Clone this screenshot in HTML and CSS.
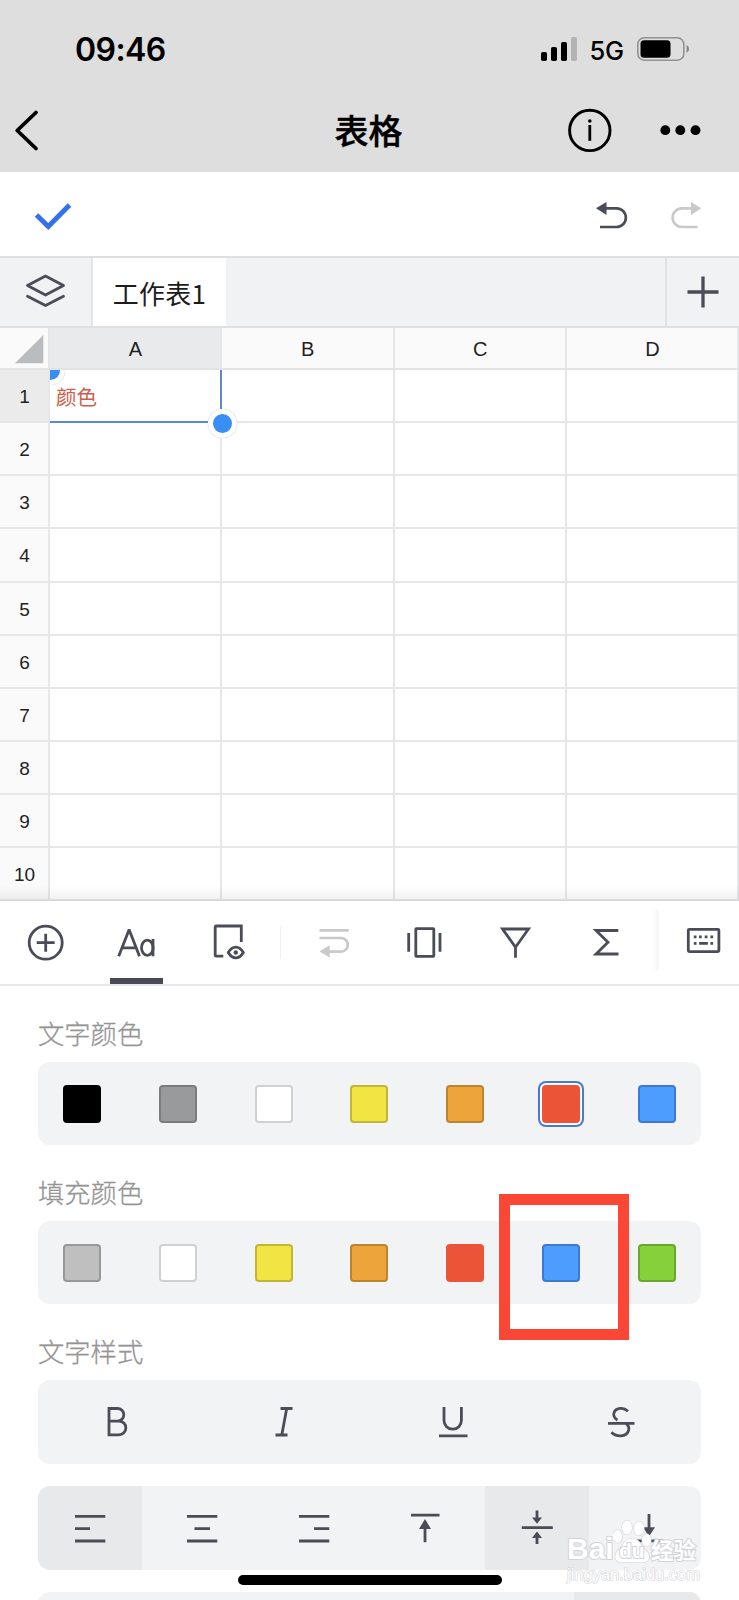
FILE: index.html
```html
<!DOCTYPE html>
<html lang="zh-CN">
<head>
<meta charset="utf-8">
<title>表格</title>
<link rel="stylesheet" href="styles.css">
</head>
<body>
<div class="phone">
  <header class="top">
    <div class="status">
      <span class="time">09:46</span>
      <div class="status-right">
        <svg width="36" height="24" viewBox="0 0 36 24"><rect y="15" width="6" height="9" rx="1.8"/><rect x="10" y="10" width="6" height="14" rx="1.8"/><rect x="20" y="5" width="6" height="19" rx="1.8"/><rect x="30" width="6" height="24" rx="1.8" fill="#b3b3b3"/></svg>
        <span class="net">5G</span>
        <svg width="53" height="24" viewBox="0 0 53 24"><rect x=".8" y=".8" width="46" height="22.4" rx="6.500" fill="none" stroke="#929292" stroke-width="1.600"/><rect x="3.500" y="3.200" width="30" height="17.600" rx="3.600"/><path d="M49.500 8q2.600 1.200 2.600 4t-2.600 4z" fill="#888"/></svg>
      </div>
    </div>
    <div class="nav">
      <svg class="back" width="60" height="84" viewBox="0 0 60 84"><path d="M36 24.500 17.200 42.500 36 60.500" fill="none" stroke="#000" stroke-width="3.800" stroke-linecap="round" stroke-linejoin="round"/></svg>
      <h1>表格</h1>
      <svg class="nav-actions" width="180" height="84" viewBox="0 0 180 84"><circle cx="30.800" cy="42.400" r="20.200" fill="none" stroke="#000" stroke-width="2.900"/><path d="M30.800 37v15.800" stroke="#000" stroke-width="2.800"/><circle cx="30.800" cy="33" r="1.800"/><circle cx="106.300" cy="42.200" r="4.900"/><circle cx="121.300" cy="42.200" r="4.900"/><circle cx="136.500" cy="42.200" r="4.900"/></svg>
    </div>
  </header>

  <div class="edit">
    <svg width="90" height="84" viewBox="0 0 90 84"><path d="M36.500 43 48.300 54.500 69.500 33" fill="none" stroke="#3472ec" stroke-width="5"/></svg>
    <svg width="160" height="84" viewBox="0 0 160 84"><path d="M26 36.300h11.500a9.300 9.300 0 0 1 0 18.700H21" fill="none" stroke="#4a4c57" stroke-width="2.700"/><path d="M17 36.300 27.500 30v13z" fill="#4a4c57"/><path d="M112.500 36.300H103a9.300 9.300 0 0 0 0 18.700h15.500" fill="none" stroke="#c9c9ca" stroke-width="2.700"/><path d="M122.300 36.300 112 30v13z" fill="#c9c9ca"/></svg>
  </div>

  <div class="tabs">
    <div class="layers"><svg width="91" height="68" viewBox="0 0 91 68"><g fill="none" stroke="#4a4c57" stroke-width="2.800" stroke-linejoin="round" stroke-linecap="round"><path d="M45.500 18 63.500 27.500 45.500 37 27.500 27.500z"/><path d="M27.500 38.300 45.500 47.500 63.500 38.300"/></g></svg></div>
    <div class="tab">工作表1</div>
    <div class="add"><svg width="72" height="68" viewBox="0 0 72 68"><path d="M20.500 34h31M36 18.500v31" stroke="#4a4c57" stroke-width="3.300"/></svg></div>
  </div>

  <div class="sheet">
    <div class="cols">
      <div class="corner"><svg width="47" height="40" viewBox="0 0 47 40"><path d="M15 35.300 43.300 7v28.300z" fill="#b9bdbf"/></svg></div>
      <div class="active">A</div><div>B</div><div>C</div><div>D</div>
    </div>
    <div class="row"><b class="active">1</b><i class="selected">颜色<span class="handle start"></span><span class="handle end"></span></i><i></i><i></i><i></i></div>
    <div class="row"><b>2</b><i></i><i></i><i></i><i></i></div>
    <div class="row"><b>3</b><i></i><i></i><i></i><i></i></div>
    <div class="row"><b>4</b><i></i><i></i><i></i><i></i></div>
    <div class="row"><b>5</b><i></i><i></i><i></i><i></i></div>
    <div class="row"><b>6</b><i></i><i></i><i></i><i></i></div>
    <div class="row"><b>7</b><i></i><i></i><i></i><i></i></div>
    <div class="row"><b>8</b><i></i><i></i><i></i><i></i></div>
    <div class="row"><b>9</b><i></i><i></i><i></i><i></i></div>
    <div class="row"><b>10</b><i></i><i></i><i></i><i></i></div>
    <div class="fade"></div>
  </div>

  <div class="tools">
    <svg viewBox="0 0 91 83"><g class="ink"><circle cx="45.700" cy="41.700" r="16.500"/><path d="M36.700 41.700h18M45.700 32.700v18"/></g></svg>
    <div class="tool-active"><svg viewBox="0 0 91 83"><g class="ink"><path d="M27.700 55.300 37.800 29.500h.6L48.500 55.300M31.500 46.800h13.200"/><ellipse cx="56.300" cy="46.800" rx="5.800" ry="7.600"/><path d="M62 38v17.300"/></g></svg></div>
    <svg viewBox="0 0 93 83"><g class="ink"><path d="M41.300 55.200H34.200a1 1 0 0 1-1-1V26a1 1 0 0 1 1-1h25.100V41"/><path d="M46.300 51.500q3-5.300 7.500-5.300t7.500 5.300q-3 5.300-7.500 5.300t-7.500-5.300z"/></g><circle cx="53.800" cy="51.500" r="2.200" fill="#4a4c57"/></svg>
    <div class="divider"></div>
    <svg viewBox="0 0 90 83"><path d="M30.500 29.400h29.200M30.500 37H52a6.800 6.800 0 0 1 0 13.600H39" fill="none" stroke="#c9c9ca" stroke-width="2.700"/><path d="M30.500 50.600 40.700 44.300v12.200z" fill="#c9c9ca"/></svg>
    <svg viewBox="0 0 91 83"><g class="ink"><path d="M29.700 32v18.700M61 32v18.700"/><rect x="36.800" y="27.700" width="18" height="27.600" rx=".5"/></g></svg>
    <svg viewBox="0 0 90 83"><path class="ink" d="M45 45.500 32.500 28h26L46 45.500M45.500 44.500v12.200"/></svg>
    <svg viewBox="0 0 92 83"><path class="ink" d="M58.300 29.500H36L48 41.200 36 53h22.500"/></svg>
    <div class="edge"></div>
    <svg viewBox="0 0 72 83"><rect class="ink" x="21.300" y="28.400" width="30.600" height="22.200" rx="1"/><path d="M26.800 35.800h2.700m2.500 0h2.700m3 0h2.700m3 0h2.700M26.800 42.300h2.700m2.600 0h8.800m2.500 0h2.700" stroke="#4a4c57" stroke-width="2.700"/></svg>
  </div>

  <main class="panel">
    <h2>文字颜色</h2>
    <div class="swatches"><span class="black"></span><span class="gray"></span><span class="white"></span><span class="yellow"></span><span class="orange"></span><span class="red picked"></span><span class="blue"></span></div>
    <h2>填充颜色</h2>
    <div class="swatches"><span class="silver"></span><span class="white"></span><span class="yellow"></span><span class="orange"></span><span class="red"></span><span class="blue"></span><span class="green"></span><div class="callout"></div></div>
    <h2>文字样式</h2>
    <div class="group styles">
      <div><svg width="40" height="40" viewBox="0 0 40 40"><path class="ink" d="M11 6.500h8.500a6 6 0 0 1 0 12.600H11zM11 19.100h10a6.800 6.800 0 0 1 0 13.700H11z"/></svg></div>
      <div><svg width="40" height="40" viewBox="0 0 40 40"><path class="ink" d="M14.500 6.500h12M9.500 33h12M20.700 6.500 15.800 33"/></svg></div>
      <div><svg width="40" height="40" viewBox="0 0 40 40"><path class="ink" d="M11 5v13.500a8.700 8.700 0 0 0 17.400 0V5M6 33.800h28.500"/></svg></div>
      <div><svg width="40" height="40" viewBox="0 0 40 40"><path class="ink" d="M27 9.200C24.500 6.800 21.500 6 18.800 6.400 12.500 7.200 10.200 14.500 16.500 18M10.500 30.200C13 33 16.500 34 20 33.800 27.500 33.300 30.500 26 25 21.500M7 21.400h26.500"/></svg></div>
    </div>
    <div class="group align">
      <div class="on"><svg width="32" height="32" viewBox="0 0 32 32"><path class="ink" d="M1 4.300h30.300M1 16.600h15M1 29h30.300"/></svg></div>
      <div><svg width="32" height="32" viewBox="0 0 32 32"><path class="ink" d="M1 4.300h30.300M8.500 16.600h15.500M1 29h30.300"/></svg></div>
      <div><svg width="32" height="32" viewBox="0 0 32 32"><path class="ink" d="M1 4.300h30.300M16 16.600h15.300M1 29h30.300"/></svg></div>
      <div><svg width="32" height="36" viewBox="0 0 32 36"><path class="ink" d="M2 5.200h28.500M16 16v16.300"/><path d="M16 9 22 19H10z" fill="#4a4c57"/></svg></div>
      <div class="on"><svg width="32" height="36" viewBox="0 0 32 36"><path class="ink" d="M.8 17.600h31M16 .500v8M16 26v8"/><path d="M11 7.500h10l-5 6.300zM11 28h10l-5-6.600z" fill="#4a4c57"/></svg></div>
      <div><svg width="32" height="36" viewBox="0 0 32 36"><path class="ink" d="M2 30.800h28.500M16 4v15"/><path d="M10 17.300h12L16 26.500z" fill="#4a4c57"/></svg></div>
    </div>
    <div class="group next"><div></div><div class="on"></div></div>
  </main>
  <div class="home"></div>
  <div class="watermark">
    <div class="brand"><span>Bai</span><div class="paw"><svg width="42" height="44" viewBox="0 0 42 44"><g fill="#fff" stroke="#d3d4d7" stroke-width="1.200"><ellipse cx="4.500" cy="16.500" rx="4.700" ry="6.500"/><ellipse cx="14" cy="7.500" rx="5" ry="7"/><ellipse cx="26" cy="8.500" rx="5" ry="7"/><ellipse cx="33.500" cy="20" rx="4.500" ry="6"/><path d="M19 18.500c8 0 9 8 14 12 6 6 3 12-4 12-7-.8-13-.8-20 0-7 0-9-7-4-12 5-4 6-12 14-12z"/></g></svg><em>du</em></div><strong>经验</strong></div>
    <div class="url">jingyan.baidu.com</div>
  </div>
</div>
</body>
</html>
```

FILE: styles.css
```css
* { box-sizing: border-box; }
body { margin: 0; font-family: "Liberation Sans", "Noto Sans CJK SC", sans-serif; color: #1f1f21; background: #fff; }
svg { display: block; flex: none; }
.phone { position: relative; width: 739px; height: 1600px; overflow: hidden; display: flex; flex-direction: column; }
.phone > * { flex: none; }
.ink { fill: none; stroke: #4a4c57; stroke-width: 2.8; }

.top { height: 172px; background: #dedede; color: #000; font-family: Inter, "Noto Sans CJK SC", sans-serif; }
.status { height: 88px; display: flex; justify-content: space-between; padding: 29px 49px 0 75px; }
.time { font-size: 32px; line-height: 41px; font-weight: 600; letter-spacing: -.6px; }
.status-right { display: flex; align-items: flex-start; padding-top: 8px; }
.net { width: 60.5px; padding-left: 13px; font-size: 25.5px; line-height: 27px; font-weight: 500; letter-spacing: -.3px; }
.nav { height: 84px; display: grid; grid-template-columns: 60px 1fr 180px; align-items: center; }
.nav h1 { margin: 0; padding: 3px 0 0 118px; text-align: center; font-size: 34px; line-height: 48px; font-weight: 500; -webkit-text-stroke: .4px #000; }

.edit { height: 86px; border-bottom: 2px solid #dedfe0; display: flex; justify-content: space-between; }
.tabs { height: 70px; border-bottom: 2px solid #dfe0e2; background: #f1f2f4; display: flex; }
.layers { width: 93px; border-right: 2px solid #e4e5e7; }
.tab { width: 133px; background: #fff; padding-top: 2px; text-align: center; font: 26px/66px "Noto Sans CJK SC", sans-serif; letter-spacing: .3px; color: #1c1c1c; }
.add { margin-left: auto; width: 74px; border-left: 2px solid #e0e1e3; }

.sheet { position: relative; height: 573px; overflow: hidden; }
.cols, .row { display: grid; grid-template-columns: 50px 172px 172.5px 172.5px 172px; }
.cols { height: 42px; font-size: 20px; line-height: 43px; text-align: center; }
.cols > div { background: #fafafb; border-right: 2px solid #e5e6e8; border-bottom: 2px solid #e2e3e5; height: 42px; padding-left: 1px; }
.cols > .corner { padding: 0; }
.cols > .active { background: #e9eaeb; }
.row { height: 53.15px; grid-template-rows: 53.15px; font-size: 19px; line-height: 54px; }
.row > * { border-right: 2px solid #e6e7e9; border-bottom: 2px solid #e6e7e9; font-style: normal; font-weight: 400; }
.row > b { background: #fafafa; text-align: center; padding-left: 1px; }
.row > .active { background: #ebebec; }
.row > .selected { position: relative; border-color: #5e87ce; padding-left: 6px; font: 20.5px/52px "Noto Sans CJK SC", sans-serif; color: #ce5e4a; }
.handle { position: absolute; width: 29px; height: 29px; border-radius: 50%; background: #398ef5; border: 5px solid #fff; box-shadow: 0 0 1px #aaa; z-index: 2; }
.start { left: -14.5px; top: -14.5px; clip-path: inset(14.5px -2px -2px 14.5px); }
.end { right: -17px; bottom: -17px; }
.fade { position: absolute; left: 0; right: 0; bottom: 0; height: 16px; background: linear-gradient(transparent, rgba(0,0,0,.06)); }

.tools { height: 85px; border-bottom: 2px solid #e7e8e9; display: grid; grid-template-columns: 91px 91px 93px 14px 90px 91px 90px 92px 15px 72px; background: #fff; }
.tools svg { width: 100%; height: 83px; }
.tool-active { height: 83px; background: linear-gradient(#494a56, #494a56) 19px 77px / 53px 6px no-repeat; }
.divider { width: 1px; height: 32px; margin: 26px 0 0 5px; background: #f0f0f0; }
.edge { height: 62px; margin: 8px 8px 0 0; background: linear-gradient(90deg, transparent, #f6f6f7); }

.panel { padding: 0 38px; }
.panel h2 { margin: 0; height: 38px; font: 300 26.3px/37px "Noto Sans CJK SC", sans-serif; color: #959595; -webkit-text-stroke: .3px #959595; }
.panel h2:first-child { margin-top: 28px; }
.swatches { position: relative; height: 83px; margin: 10px 0 28px; padding: 0 25px; border-radius: 12px; background: #f2f3f5; display: flex; align-items: center; justify-content: space-between; }
.swatches span { width: 38px; height: 38px; border-radius: 4px; border: 2px solid rgba(0,0,0,.2); }
.swatches .black { background: #000; }
.swatches .gray { background: #999a9c; }
.swatches .silver { background: #bfbfc0; }
.swatches .white { background: #fff; border-color: #d0d0d1; }
.swatches .yellow { background: #f2e443; }
.swatches .orange { background: #eda53b; }
.swatches .red { background: #eb5437; border-color: #eb5437; }
.swatches .blue { background: #4d9cff; }
.swatches .green { background: #86d03b; }
.swatches .picked { box-shadow: 0 0 0 2px #fff, 0 0 0 4px #4c78cf; }
.callout { position: absolute; left: 461px; top: -27px; width: 130px; height: 146px; border: 11px solid #fc4737; }
.group { display: grid; gap: 7.3px; height: 83.5px; margin-bottom: 22.5px; border-radius: 12px; overflow: hidden; background: #f2f3f5; }
.group > div { display: flex; align-items: center; justify-content: center; }
.styles { margin-top: 10px; grid-template-columns: repeat(4, 1fr); }
.align { grid-template-columns: repeat(6, 1fr); }
.next { grid-template-columns: 536px 1fr; gap: 0; }
.on { background: #e8e9eb; }

.home { position: absolute; left: 238px; top: 1575px; width: 264px; height: 10px; border-radius: 5px; background: #000; }
.watermark { position: absolute; left: 567px; top: 1520px; width: 140px; color: #fff; -webkit-text-stroke: 2px #d3d4d7; paint-order: stroke fill; }
.brand { display: flex; height: 44px; align-items: flex-end; }
.brand > span { width: 46px; font: 700 30px/30px "Liberation Sans", sans-serif; }
.paw { position: relative; width: 38px; }
.paw em { position: absolute; left: 6px; top: 20px; font: 700 21px/22px "Liberation Sans", sans-serif; }
.brand strong { font: 700 22.5px/26px "Noto Sans CJK SC", sans-serif; padding-bottom: 2px; }
.url { margin-top: -1px; font: 16.5px/22px "Liberation Sans", sans-serif; -webkit-text-stroke-width: 1.2px; }
```
